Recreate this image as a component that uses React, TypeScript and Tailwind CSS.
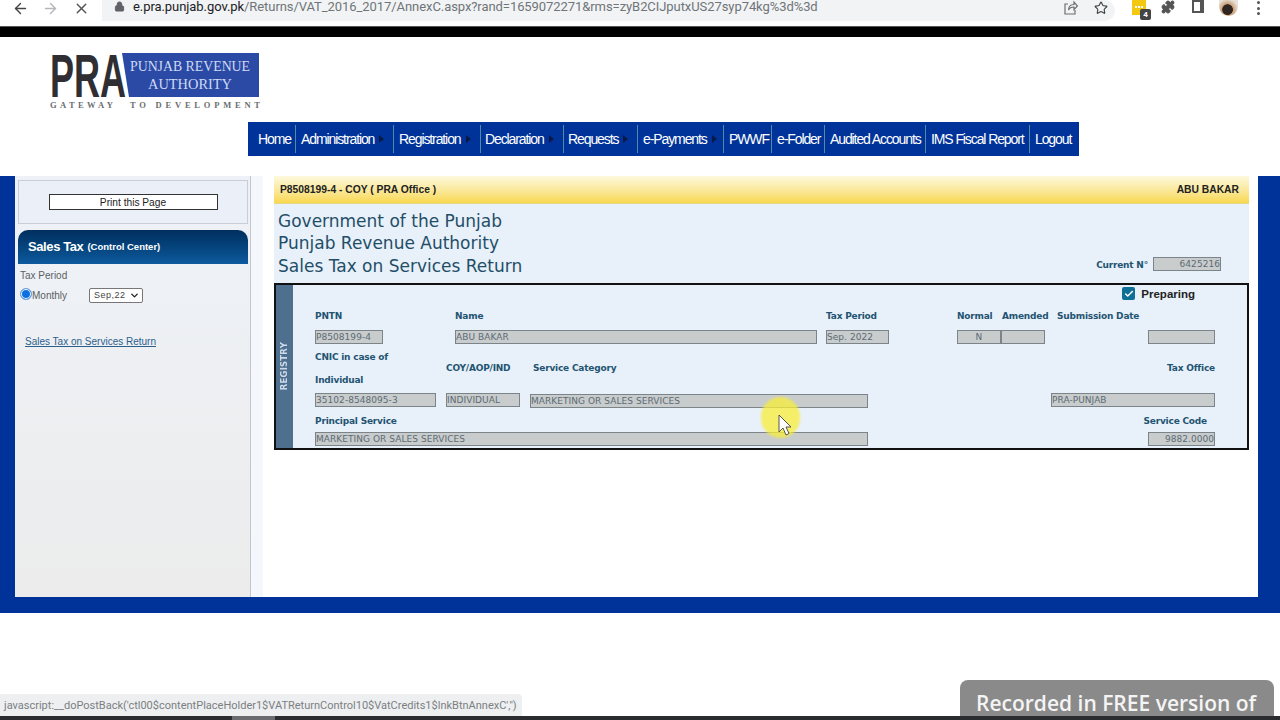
import { ArrowLeft, ArrowRight, X, Lock, Star, Puzzle, ChevronDown, Check } from "lucide-react";

const menu = [
  { t: "Home", w: "w-[47px] pl-[10px]", a: false, d: false },
  { t: "Administration", w: "w-[98px] pl-[5px]", a: true, d: true },
  { t: "Registration", w: "w-[87px] pl-[5px]", a: true, d: true },
  { t: "Declaration", w: "w-[83px] pl-[4px]", a: true, d: true },
  { t: "Requests", w: "w-[74px] pl-[4px]", a: true, d: true },
  { t: "e-Payments", w: "w-[86px] pl-[5px]", a: true, d: true },
  { t: "PWWF", w: "w-[48px] pl-[5px]", a: false, d: true },
  { t: "e-Folder", w: "w-[53px] pl-[5px]", a: false, d: true },
  { t: "Audited Accounts", w: "w-[101px] pl-[5px]", a: false, d: true },
  { t: "IMS Fiscal Report", w: "w-[104px] pl-[5px]", a: false, d: true },
  { t: "Logout", w: "w-[50px] pl-[5px]", a: false, d: true },
];

function Box({ className = "", children }: { className?: string; children?: React.ReactNode }) {
  return (
    <div className={"h-[14px] shrink-0 bg-[#c9cccd] border border-[#7b8488] text-[9px] leading-[12px] tracking-[0.05px] text-[#5b6b73] font-['DejaVu_Sans',sans-serif] overflow-hidden whitespace-nowrap " + className}>
      {children}
    </div>
  );
}

function Label({ className = "", children }: { className?: string; children: React.ReactNode }) {
  return (
    <div className={"shrink-0 pt-[2px] font-bold text-[9px] tracking-[-0.2px] text-[#1f5472] font-['DejaVu_Sans',sans-serif] whitespace-nowrap " + className}>
      {children}
    </div>
  );
}

function Logo() {
  return (
    <svg width="212" height="60" viewBox="0 0 212 60" className="block overflow-visible">
      <polygon points="72,1 209,1 209,45 79,45" fill="#2a4aa6" />
      <text x="0" y="45" fontFamily="Liberation Sans" fontWeight="700" fontSize="62" fill="#2f2f33" textLength="76" lengthAdjust="spacingAndGlyphs">PRA</text>
      <text x="80" y="19" fontFamily="Liberation Serif" fontSize="14.500" fill="#cfdaf3" textLength="120" lengthAdjust="spacingAndGlyphs">PUNJAB REVENUE</text>
      <text x="98" y="37" fontFamily="Liberation Serif" fontSize="14.500" fill="#cfdaf3" textLength="84" lengthAdjust="spacingAndGlyphs">AUTHORITY</text>
      <text x="0" y="56" fontFamily="Liberation Serif" fontWeight="700" fontSize="8.500" fill="#6a6d70" textLength="63" lengthAdjust="spacing">GATEWAY</text>
      <text x="80" y="56" fontFamily="Liberation Serif" fontWeight="700" fontSize="8.500" fill="#6a6d70" textLength="130" lengthAdjust="spacing">TO DEVELOPMENT</text>
    </svg>
  );
}

function ChromeBar() {
  return (
    <div className="h-[27px] bg-white border-b border-[#555] flex items-start relative overflow-hidden font-['Roboto',sans-serif]">
      <div className="flex items-center h-[16px] text-[#5f6368]">
        <ArrowLeft size={17} className="ml-[12px] text-[#444]" />
        <ArrowRight size={17} className="ml-[13px] text-[#b4b7ba]" />
        <X size={17} className="ml-[14px] text-[#555]" />
      </div>
      <div className="ml-[12px] h-[21px] w-[1013px] bg-[#f1f3f4] rounded-r-[12px] flex items-start pl-[12px] shrink-0">
        <Lock size={11} fill="#5f6368" className="text-[#5f6368] mt-[1px] shrink-0" />
        <div className="ml-[8px] text-[13px] leading-[14px] whitespace-nowrap tracking-[-0.07px] text-[#70757a]">
          <span className="text-[#202124]">e.pra.punjab.gov.pk</span>/Returns/VAT_2016_2017/AnnexC.aspx?rand=1659072271&amp;rms=zyB2CIJputxUS27syp74kg%3d%3d
        </div>
        <div className="ml-auto flex items-center h-[15px] pr-[7px] text-[#5f6368]">
          <svg width="14" height="15" viewBox="0 0 14 15" fill="none" stroke="#6b6f73" strokeWidth="1.2" className="mr-[16px]">
            <path d="M4 4H1v10h10v-4" />
            <path d="M4.5 10c0-4 3-5.5 5.5-5.5V2l3.5 4-3.5 3.5V7c-2.5 0-4.500 1-5.500 3z" />
          </svg>
          <Star size={14} className="text-[#444]" />
        </div>
      </div>
      <div className="relative ml-[17px] w-[14px] h-[15px] bg-[#f2c811] shrink-0 flex justify-center gap-px pt-[6px]">
        <div className="w-[2px] h-[2px] bg-white" />
        <div className="w-[2px] h-[2px] bg-white" />
        <div className="w-[2px] h-[2px] bg-white" />
        <div className="absolute left-[8px] top-[9px] w-[11px] h-[11px] rounded-[2px] bg-[#444] text-white text-[8px] leading-[11px] text-center font-bold">4</div>
      </div>
      <Puzzle size={14} fill="#555" className="ml-[15px] text-[#555] shrink-0" />
      <div className="ml-[17px] w-[12px] h-[13px] border-2 border-r-[4px] border-[#555] shrink-0" />
      <div className="ml-[15px] w-[19px] h-[16px] rounded-b-full bg-[radial-gradient(circle_at_45%_60%,#2f2622_35%,#c9a078_40%,#e9e2da_75%)] shrink-0" />
      <div className="ml-[19px] flex flex-col gap-[2.5px] pt-[1px] shrink-0">
        <div className="w-[3px] h-[3px] rounded-full bg-[#555]" />
        <div className="w-[3px] h-[3px] rounded-full bg-[#555]" />
        <div className="w-[3px] h-[3px] rounded-full bg-[#555]" />
      </div>
    </div>
  );
}

function Sidebar() {
  return (
    <div className="w-[236px] shrink-0 bg-gradient-to-b from-[#eef2f8] to-[#ececec] border-r border-[#c3c7cc] pl-[3px] pr-[2px] pt-[4px] flex flex-col font-['Liberation_Sans',sans-serif]">
      <div className="h-[44px] bg-[#ebeff7] border border-[#c6ced8] flex items-center justify-center">
        <div className="w-[169px] h-[16px] bg-white border border-[#333] text-[10.2px] leading-[15px] text-center text-[#222]">Print this Page</div>
      </div>
      <div className="mt-[6px] h-[34px] rounded-t-[10px] bg-gradient-to-b from-[#012f5e] to-[#0d5a9e] flex items-center pl-[10px] text-white font-bold">
        <span className="text-[13px] tracking-[-0.4px]">Sales Tax</span>
        <span className="text-[9.5px] ml-[4px]">(Control Center)</span>
      </div>
      <div className="pl-[2px] mt-[6px] text-[10px] leading-[12px] text-[#5a5f63]">Tax Period</div>
      <div className="flex items-start pl-[2px] mt-[6px] h-[20px]">
        <div className="w-[12px] h-[12px] rounded-full border border-[#6aa0e0] bg-[#0d6fe0] ring-1 ring-inset ring-white shrink-0" />
        <div className="text-[10px] leading-[14px] mt-[1px] text-[#5a5f63] w-[57px]">Monthly</div>
        <div className="w-[54px] h-[15px] bg-white border border-[#777] rounded-[2px] flex items-center pl-[4px] text-[9px] tracking-[0.5px] text-[#444]">
          Sep,22
          <ChevronDown size={11} strokeWidth={3} className="ml-[3px] text-[#222]" />
        </div>
      </div>
      <div className="pl-[7px] mt-[27px] text-[10px] leading-[14px] text-[#2c5f8c] underline">Sales Tax on Services Return</div>
    </div>
  );
}

function Content() {
  return (
    <div className="ml-[11px] w-[975px] shrink-0 font-['DejaVu_Sans',sans-serif]">
      <div className="h-[28px] bg-gradient-to-b from-[#fdf9dd] to-[#f8d84c] border-b border-[#e6d78a] flex items-center justify-between pl-[6px] pr-[10px] font-['Liberation_Sans',sans-serif] font-bold text-[10.3px] text-[#222]">
        <span>P8508199-4 - COY ( PRA Office )</span>
        <span>ABU BAKAR</span>
      </div>
      <div className="h-[79px] bg-[#e8f0f9] flex items-end justify-between pl-[4px] pr-[28px]">
        <div className="pb-[6px] text-[17px] leading-[22.500px] text-[#1f4e68]">
          <div>Government of the Punjab</div>
          <div>Punjab Revenue Authority</div>
          <div>Sales Tax on Services Return</div>
        </div>
        <div className="flex items-center pb-[11px]">
          <Label className="mr-[5px]">Current N°</Label>
          <Box className="w-[68px] text-right">6425216</Box>
        </div>
      </div>
      <div className="h-[167px] border-2 border-[#111] flex bg-[#e8f0f9]">
        <div className="w-[17px] bg-[#4f6f8e] flex items-center justify-center">
          <span className="[writing-mode:vertical-rl] rotate-180 text-[8.500px] font-bold tracking-[0.2px] text-[#cddaea]">REGISTRY</span>
        </div>
        <div className="flex-1 pl-[22px] w-0">
          <div className="h-[24px] flex justify-end items-start pr-[52px] pt-[2px]">
            <div className="w-[13px] h-[13px] rounded-[2px] bg-[#0f6f96] flex items-center justify-center">
              <Check size={10} strokeWidth={3.5} className="text-white" />
            </div>
            <span className="ml-[6px] text-[11.500px] leading-[14px] font-bold font-['Liberation_Sans',sans-serif] text-[#222]">Preparing</span>
          </div>

          <div className="flex h-[14px] items-center">
            <Label className="w-[140px]">PNTN</Label>
            <Label className="w-[371px]">Name</Label>
            <Label className="w-[131px]">Tax Period</Label>
            <Label className="w-[45px]">Normal</Label>
            <Label className="w-[55px]">Amended</Label>
            <Label>Submission Date</Label>
          </div>
          <div className="flex mt-[7px]">
            <Box className="w-[68px]">P8508199-4</Box>
            <Box className="w-[362px] ml-[72px]">ABU BAKAR</Box>
            <Box className="w-[63px] ml-[9px]">Sep. 2022</Box>
            <Box className="w-[44px] ml-[68px] text-center">N</Box>
            <Box className="w-[44px]" />
            <Box className="w-[67px] ml-[103px]" />
          </div>

          <div className="flex h-[46px] items-center mt-[1px]">
            <Label className="w-[131px] leading-[23px]">
              CNIC in case of
              <br />
              Individual
            </Label>
            <Label className="w-[87px]">COY/AOP/IND</Label>
            <Label>Service Category</Label>
            <Label className="ml-auto mr-[32px]">Tax Office</Label>
          </div>
          <div className="flex mt-[2px]">
            <Box className="w-[121px]">35102-8548095-3</Box>
            <Box className="w-[74px] ml-[10px]">INDIVIDUAL</Box>
            <Box className="w-[338px] ml-[10px] mt-px">MARKETING OR SALES SERVICES</Box>
            <Box className="w-[164px] ml-[183px]">PRA-PUNJAB</Box>
          </div>

          <div className="flex h-[14px] items-center mt-[6px]">
            <Label>Principal Service</Label>
            <Label className="ml-auto mr-[40px]">Service Code</Label>
          </div>
          <div className="flex mt-[4px]">
            <Box className="w-[553px]">MARKETING OR SALES SERVICES</Box>
            <Box className="w-[67px] ml-[280px] text-right">9882.0000</Box>
          </div>
        </div>
      </div>
    </div>
  );
}

export default function App() {
  return (
    <div className="relative w-[1280px] h-[720px] overflow-hidden bg-white font-['Liberation_Sans',sans-serif]">
      <ChromeBar />
      <div className="h-[10px] bg-black" />
      <div className="h-[139px] bg-white pt-[15px]">
        <div className="ml-[50px]">
          <Logo />
        </div>
        <div className="ml-[248px] mt-[10px] w-[831px] h-[34px] bg-[#003399] flex items-center">
          {menu.map((m) => (
            <div key={m.t} className={"h-[28px] flex items-center whitespace-nowrap text-[14px] tracking-[-1.1px] text-white " + m.w + (m.d ? " border-l border-[#4f8aa8]" : "")}>
              {m.t}
              {m.a && <span className="ml-[5px] w-0 h-0 border-y-[4px] border-y-transparent border-l-[5px] border-l-[#0a1a44]" />}
            </div>
          ))}
        </div>
      </div>
      <div className="h-[437px] bg-[#003399] pl-[15px] pr-[22px] pb-[16px]">
        <div className="h-full flex bg-white">
          <Sidebar />
          <div className="w-[12px] shrink-0 bg-[#f4f7fc]" />
          <Content />
        </div>
      </div>
      <div className="h-[103px] bg-white" />
      <div className="h-[4px] bg-[#2a2c2f] flex">
        <div className="ml-[232px] w-[43px] bg-[#6a6c6f]" />
      </div>

      <div className="absolute left-[761px] top-[397px] w-[39px] h-[41px] rounded-full bg-[#f8ee3a] opacity-75 blur-[1px]" />
      <svg width="14" height="22" viewBox="0 0 14 22" className="absolute left-[778px] top-[414px]">
        <path d="M1 1v17l4-4 3 7 3-1.500-3-6.500h5z" fill="#fff" stroke="#444" strokeWidth="0.900" />
      </svg>

      <div className="absolute left-0 top-[694px] w-[522px] h-[22px] bg-[#eeeff0] rounded-tr-[4px] pl-[4px] text-[11px] leading-[24px] text-[#7a7f84] font-['Roboto',sans-serif] whitespace-nowrap overflow-hidden">
        {"javascript:__doPostBack('ctl00$contentPlaceHolder1$VATReturnControl10$VatCredits1$lnkBtnAnnexC','')"}
      </div>
      <div className="absolute left-[960px] top-[680px] w-[314px] h-[36px] bg-[#8a8a8a] rounded-t-[8px] pl-[16px] pt-[11px] text-[21px] leading-[25px] text-[#f4f4f4] font-['Open_Sans',sans-serif] font-semibold whitespace-nowrap">
        Recorded in FREE version of
      </div>
    </div>
  );
}
